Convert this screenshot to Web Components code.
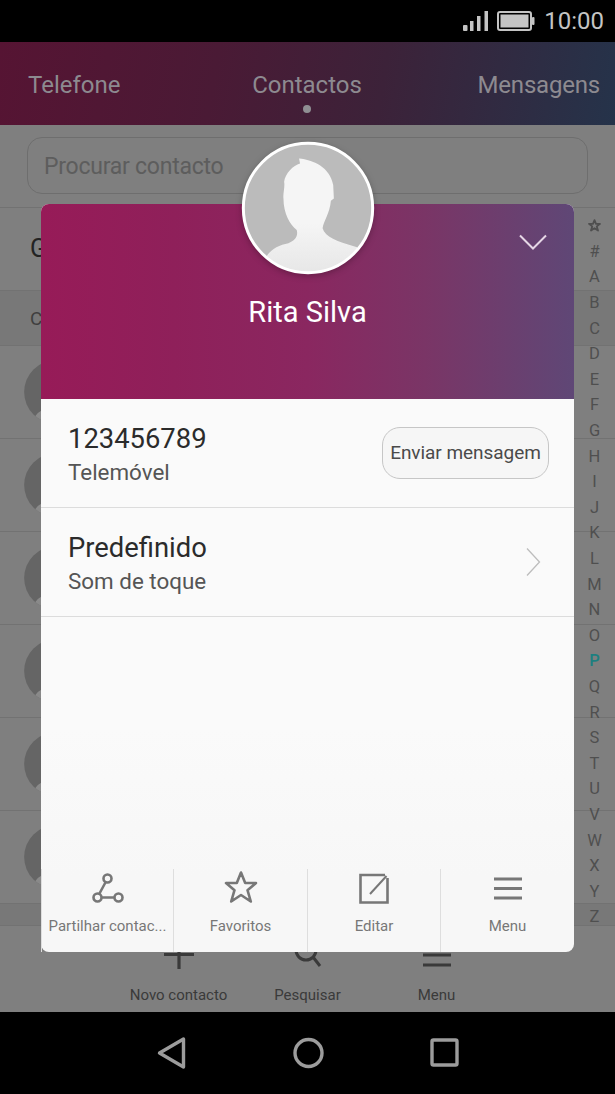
<!DOCTYPE html>
<html>
<head>
<meta charset="utf-8">
<title>Contactos</title>
<style>
  html, body { margin: 0; padding: 0; background: #000; }
  body { width: 615px; height: 1094px; overflow: hidden; font-family: Roboto, "Liberation Sans", sans-serif; }
</style>
</head>
<body>
<phone-screen>
  <status-bar slot="top"></status-bar>
  <tab-bar slot="top"></tab-bar>
  <contact-list></contact-list>
  <action-bar></action-bar>
  <contact-sheet slot="over" name="Rita Silva">
    <sheet-row title="123456789" sub="Telemóvel"><sheet-button>Enviar mensagem</sheet-button></sheet-row>
    <sheet-row title="Predefinido" sub="Som de toque">
      <svg style="margin-right:8px" width="16" height="30" viewBox="0 0 16 30"><path d="M2 1.500 14.500 15 2 28.500" fill="none" stroke="#bdbdbd" stroke-width="1.300"/></svg>
    </sheet-row>
  </contact-sheet>
  <nav-bar slot="bottom"></nav-bar>
</phone-screen>

<script>
class PhoneScreen extends HTMLElement {
    constructor() {
        super();
        this.attachShadow({ mode: 'open' });
        this.shadowRoot.innerHTML = `
            <style>
                :host { display: flex; flex-direction: column; position: relative; width: 615px; height: 1094px; background: #7f7f7f; }
                main { flex: 1; display: flex; flex-direction: column; min-height: 0; }
            </style>
            <slot name="top"></slot>
            <main><slot></slot></main>
            <slot name="bottom"></slot>
            <slot name="over"></slot>
        `;
    }
}

class StatusBar extends HTMLElement {
    constructor() {
        super();
        this.attachShadow({ mode: 'open' });
        this.shadowRoot.innerHTML = `
            <style>
                :host { display: flex; align-items: center; justify-content: flex-end; gap: 9px; height: 42px; padding: 0 11px 0 0; background: #000; color: #c4c4c4; font: 400 24px Roboto, sans-serif; box-sizing: border-box; }
                svg { display: block; }
                .signal { margin-right: -1px; }
            </style>
            <svg class="signal" width="26" height="22" viewBox="0 0 26 22" fill="#c4c4c4">
                <rect x="0" y="15" width="4.500" height="6" rx="1"/>
                <rect x="7" y="11" width="3.500" height="10"/>
                <rect x="14" y="6" width="3.500" height="15"/>
                <rect x="21.500" y="1" width="3.500" height="20"/>
            </svg>
            <svg width="38" height="20" viewBox="0 0 38 20">
                <rect x="1" y="1" width="33" height="18" rx="2" fill="none" stroke="#c4c4c4" stroke-width="2"/>
                <rect x="3.500" y="3.500" width="28" height="13" fill="#c4c4c4"/>
                <rect x="35" y="6" width="2.500" height="8" rx="1" fill="#c4c4c4"/>
            </svg>
            <span>10:00</span>
        `;
    }
}

class TabBar extends HTMLElement {
    constructor() {
        super();
        this.attachShadow({ mode: 'open' });
        this.shadowRoot.innerHTML = `
            <style>
                :host { display: grid; grid-template-columns: 1fr auto 1fr; height: 83px; padding: 27px 15px 0 28px; box-sizing: border-box;
                    background: linear-gradient(100deg, #561433 0%, #4a1a35 35%, #3c2239 62%, #25334a 100%);
                    color: #8d8a90; font: 400 24px Roboto, sans-serif; }
                span { position: relative; line-height: 32px; }
                span:last-child { text-align: right; letter-spacing: -0.2px; }
                .on { left: -7px; }
                .on::after { content: ""; position: absolute; left: 50%; top: 36px; width: 8px; height: 8px; margin-left: -4px; border-radius: 50%; background: #8f8f93; }
            </style>
            <span>Telefone</span>
            <span class="on">Contactos</span>
            <span>Mensagens</span>
        `;
    }
}

let avatarCount = 0;

class UserAvatar extends HTMLElement {
    constructor() {
        super();
        this.attachShadow({ mode: 'open' });
        const id = 'avatar' + (++avatarCount);
        this.shadowRoot.innerHTML = `
            <style>
                :host { display: block; width: var(--size, 64px); height: var(--size, 64px); }
                svg { display: block; width: 100%; height: 100%; overflow: visible; }
                .bg { fill: var(--avatar-bg, #bbbbbb); }
                .ring { fill: none; stroke: var(--avatar-ring, none); stroke-width: 9; }
                .head { stop-color: var(--avatar-head, #f5f5f5); }
                .foot { stop-color: var(--avatar-foot, #e6e6e6); }
            </style>
            <svg viewBox="38 38 392 392">
                <defs>
                    <clipPath id="${id}c"><circle cx="234" cy="234" r="195"/></clipPath>
                    <linearGradient id="${id}" x1="0" y1="0" x2="0" y2="1">
                        <stop class="head" offset="0.55"/><stop class="foot" offset="1"/>
                    </linearGradient>
                </defs>
                <circle class="bg" cx="234" cy="234" r="195"/>
                <path clip-path="url(#${id}c)" fill="url(#${id})" d="M110 378C125 355 150 345 175 340C195 333 205 320 200 300C180 285 160 250 160 205C158 190 165 170 162 155C165 130 190 105 210 100L207 85C250 90 300 110 310 165L312 205L303 212C300 250 280 275 278 295C285 320 320 335 382 352L400 440L80 440Z"/>
                <circle class="ring" cx="234" cy="234" r="195"/>
            </svg>
        `;
    }
}

class ContactList extends HTMLElement {
    constructor() {
        super();
        this.attachShadow({ mode: 'open' });
        const rows = Array.from({ length: 6 }, () => `
            <div class="row"><user-avatar></user-avatar></div>`).join('');
        const letters = ['★', '#', ...'ABCDEFGHIJKLMNOPQRSTUVWXYZ'];
        this.shadowRoot.innerHTML = `
            <style>
                :host { display: block; flex: 1; position: relative; min-height: 0; color: #232323; font-family: Roboto, sans-serif; }
                .search-wrap { height: 83px; padding: 12px 27px 0; box-sizing: border-box; border-bottom: 1px solid #727272; }
                .search { height: 57px; box-sizing: border-box; border: 1px solid #6e6e6e; border-radius: 15px; padding: 0 16px; line-height: 57px; font-size: 23px; letter-spacing: -0.25px; color: #5d5d5d; }
                .groups { height: 83px; box-sizing: border-box; padding-left: 30px; line-height: 82px; font-size: 25px; border-bottom: 1px solid #727272; }
                .section { height: 55px; box-sizing: border-box; padding-left: 30px; line-height: 55px; font-size: 19px; background: #787878; color: #3f3f3f; border-bottom: 1px solid #727272; }
                .row { height: 93px; box-sizing: border-box; padding: 14px 0 0 24px; border-bottom: 1px solid #727272; --size: 64px; --avatar-bg: #656565; --avatar-head: #8f8f8f; --avatar-foot: #868686; }
                .tail { height: 22px; background: #787878; border-bottom: 1px solid #727272; box-sizing: border-box; }
                alpha-index { position: absolute; top: 88px; right: 0; }
            </style>
            <div class="search-wrap"><div class="search">Procurar contacto</div></div>
            <div class="groups">Grupos</div>
            <div class="section">Contactos</div>
            ${rows}
            <div class="tail"></div>
            <alpha-index letters="${letters.join(' ')}" active="P"></alpha-index>
        `;
    }
}

class AlphaIndex extends HTMLElement {
    constructor() {
        super();
        this.attachShadow({ mode: 'open' });
        const active = this.getAttribute('active');
        const star = '<svg width="13" height="13" viewBox="0 0 13 13" fill="none" stroke="#4f4f4f" stroke-width="1.800" stroke-linejoin="round"><path d="M6.500 1.200 8 4.900H12L8.800 7.400 10 11.600 6.500 9.200 3 11.600 4.200 7.400 1 4.900H5Z"/></svg>';
        const items = this.getAttribute('letters').split(' ')
            .map(l => `<span class="${l === active ? 'on' : ''}">${l === '★' ? star : l}</span>`).join('');
        this.shadowRoot.innerHTML = `
            <style>
                :host { display: flex; flex-direction: column; width: 41px; font: 400 16.500px Roboto, sans-serif; color: #4f4f4f; text-align: center; }
                span { display: flex; align-items: center; justify-content: center; height: 25.600px; }
                .on { color: #1d7f80; font-weight: 500; }
            </style>
            ${items}
        `;
    }
}

class ActionBar extends HTMLElement {
    constructor() {
        super();
        this.attachShadow({ mode: 'open' });
        this.shadowRoot.innerHTML = `
            <style>
                :host { display: grid; grid-template-columns: 129px 129px 129px; justify-content: center; height: 86px; box-sizing: border-box; color: #3a3a3a; font: 400 15px Roboto, sans-serif; text-align: center; }
                div { display: flex; flex-direction: column; align-items: center; }
                svg { display: block; margin-top: 13px; }
                span { margin-top: 15px; line-height: 22px; }
            </style>
            <div>
                <svg width="30" height="30" viewBox="0 0 30 30" fill="none" stroke="#3a3a3a" stroke-width="3.200"><path d="M0 15.500H30M15 0V30"/></svg>
                <span>Novo contacto</span>
            </div>
            <div>
                <svg width="30" height="30" viewBox="0 0 30 30" fill="none" stroke="#3a3a3a" stroke-width="3"><circle cx="13" cy="11" r="10"/><path d="M20 18 27 27"/></svg>
                <span>Pesquisar</span>
            </div>
            <div>
                <svg width="30" height="30" viewBox="0 0 30 30" fill="none" stroke="#3a3a3a" stroke-width="3.200"><path d="M1 6H29M1 16H29M1 26H29"/></svg>
                <span>Menu</span>
            </div>
        `;
    }
}

class NavBar extends HTMLElement {
    constructor() {
        super();
        this.attachShadow({ mode: 'open' });
        this.shadowRoot.innerHTML = `
            <style>
                :host { display: block; height: 82px; background: #000; }
                svg { display: block; }
            </style>
            <svg width="615" height="82" viewBox="0 0 615 82" fill="none" stroke="#9c9c9c" stroke-width="3.400" stroke-linejoin="round">
                <path d="M159.500 41 183.500 27V55Z"/>
                <circle cx="308.500" cy="41" r="13.500"/>
                <rect x="432" y="28" width="25" height="25" rx="1.500"/>
            </svg>
        `;
    }
}

class ContactSheet extends HTMLElement {
    constructor() {
        super();
        this.attachShadow({ mode: 'open' });
        this.shadowRoot.innerHTML = `
            <style>
                :host { display: flex; flex-direction: column; position: absolute; left: 41px; top: 204px; width: 533px; height: 748px; border-radius: 8px; background: linear-gradient(180deg, #fafafa 0%, #fafafa 70%, #f7f7f7 90%); font-family: Roboto, sans-serif; --size: 130px; --avatar-ring: #fff; }
                header { position: relative; height: 195px; box-sizing: border-box; padding-top: 90px; border-radius: 8px 8px 0 0; text-align: center; color: #fff; font-size: 29px; line-height: 36px;
                    background: linear-gradient(90deg, #971b58 0%, #8f205a 25%, #8a2760 50%, #7a3566 72%, #5f4776 100%); }
                user-avatar { position: absolute; left: 202px; top: -61px; filter: drop-shadow(0 2px 3px rgba(0,0,0,.25)); }
                .close { position: absolute; right: 27px; top: 30px; }
                .rows { flex: 1; }
                sheet-actions { flex: none; }
            </style>
            <header>
                <user-avatar></user-avatar>
                <span>${this.getAttribute('name')}</span>
                <svg class="close" width="28" height="16" viewBox="0 0 28 16" fill="none" stroke="#e6d7e6" stroke-width="2"><path d="M1 1.500 14 14.500 27 1.500"/></svg>
            </header>
            <div class="rows"><slot></slot></div>
            <sheet-actions></sheet-actions>
        `;
    }
}

class SheetRow extends HTMLElement {
    constructor() {
        super();
        this.attachShadow({ mode: 'open' });
        this.shadowRoot.innerHTML = `
            <style>
                :host { display: flex; align-items: center; justify-content: space-between; height: 109px; box-sizing: border-box; padding: 0 25px 0 27px; border-bottom: 1px solid #dcdcdc; }
                .text { padding-top: 4px; }
                .title { font-size: 27.400px; line-height: 34px; color: #2b2b2b; }
                .sub { font-size: 22.400px; line-height: 32px; color: #555; }
            </style>
            <div class="text">
                <div class="title">${this.getAttribute('title')}</div>
                <div class="sub">${this.getAttribute('sub')}</div>
            </div>
            <slot></slot>
        `;
    }
}

class SheetButton extends HTMLElement {
    constructor() {
        super();
        this.attachShadow({ mode: 'open' });
        this.shadowRoot.innerHTML = `
            <style>
                :host { display: block; width: 167px; height: 52px; box-sizing: border-box; border: 1px solid #c6c6c6; border-radius: 18px; background: #f6f6f6; color: #4a4a4a; font: 400 19px/50px Roboto, sans-serif; letter-spacing: -0.050px; text-align: center; white-space: nowrap; }
            </style>
            <slot></slot>
        `;
    }
}

class SheetActions extends HTMLElement {
    constructor() {
        super();
        this.attachShadow({ mode: 'open' });
        const stroke = 'fill="none" stroke="#777" stroke-width="2.600"';
        this.shadowRoot.innerHTML = `
            <style>
                :host { display: grid; grid-template-columns: 132px 134px 133px 134px; height: 83px; border-radius: 0 0 8px 8px; color: #777; font: 400 15px Roboto, sans-serif; text-align: center; }
                div { display: flex; flex-direction: column; align-items: center; border-left: 1px solid #dedede; box-sizing: border-box; white-space: nowrap; min-width: 0; }
                div:first-child { border-left: 0; }
                svg { display: block; width: 34px; height: 34px; margin-top: 1px; }
                span { margin-top: 11px; line-height: 22px; }
            </style>
            <div>
                <svg viewBox="0 0 34 34" ${stroke}><circle cx="16.500" cy="8.500" r="4"/><circle cx="6.500" cy="27.500" r="4"/><circle cx="27.500" cy="27.500" r="4"/><path d="M14.700 12 8.200 24M10.500 27.500H23.500"/></svg>
                <span>Partilhar contac...</span>
            </div>
            <div>
                <svg viewBox="0 0 34 34" ${stroke} stroke-linejoin="round"><path d="M17 2.500 21.200 13H32L23.500 20.200 26.800 31.500 17 25 7.200 31.500 10.500 20.200 2 13H12.800Z"/></svg>
                <span>Favoritos</span>
            </div>
            <div>
                <svg viewBox="0 0 34 34" ${stroke}><path d="M30.500 8V32.500H3.500V5H28"/><path d="M29.500 6 13 24" stroke-width="2"/></svg>
                <span>Editar</span>
            </div>
            <div>
                <svg viewBox="0 0 34 34" fill="none" stroke="#777" stroke-width="3.200"><path d="M3 9H31M3 18.500H31M3 28H31"/></svg>
                <span>Menu</span>
            </div>
        `;
    }
}

customElements.define('phone-screen', PhoneScreen);
customElements.define('status-bar', StatusBar);
customElements.define('tab-bar', TabBar);
customElements.define('user-avatar', UserAvatar);
customElements.define('alpha-index', AlphaIndex);
customElements.define('contact-list', ContactList);
customElements.define('action-bar', ActionBar);
customElements.define('nav-bar', NavBar);
customElements.define('sheet-actions', SheetActions);
customElements.define('contact-sheet', ContactSheet);
customElements.define('sheet-row', SheetRow);
customElements.define('sheet-button', SheetButton);
</script>
</body>
</html>
